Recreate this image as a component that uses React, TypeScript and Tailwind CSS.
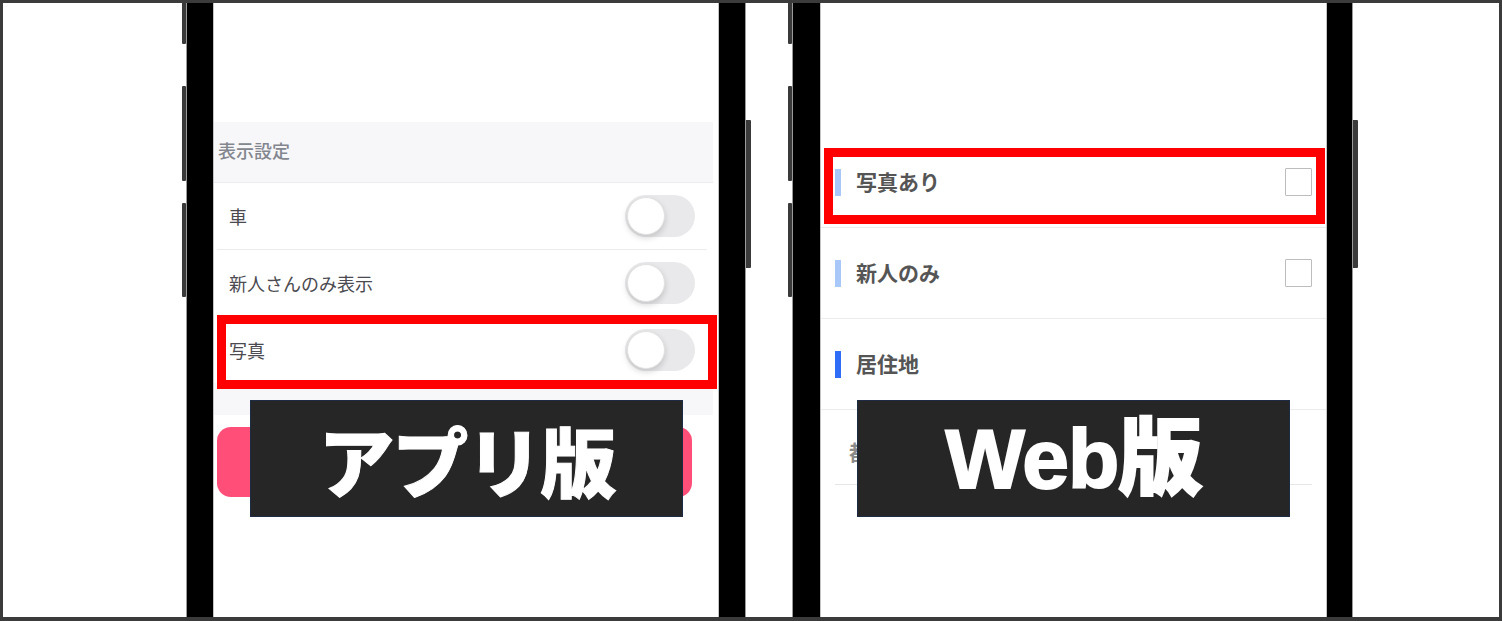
const jp = { fontFamily: '"Noto Sans CJK JP", "Noto Sans", sans-serif' };

function SideButtonsLeft() {
  return (
    <div className="flex w-[4px] shrink-0 flex-col">
      <div className="h-[41px] rounded-b-[1px] bg-[#3a3a3a]" />
      <div className="mt-[42px] h-[95px] rounded-[1px] bg-[#3a3a3a]" />
      <div className="mt-[22px] h-[94px] rounded-[1px] bg-[#3a3a3a]" />
    </div>
  );
}

function SideButtonRight() {
  return (
    <div className="flex w-[5px] shrink-0 flex-col">
      <div className="mt-[117px] h-[148px] rounded-r-[1px] bg-[#3a3a3a]" />
    </div>
  );
}

function Phone({ screenW, leftBezel, rightBezel, children }: { screenW: string; leftBezel: string; rightBezel: string; children: React.ReactNode }) {
  return (
    <div className="flex h-full shrink-0">
      <SideButtonsLeft />
      <div className="w-px shrink-0 bg-[#9a9a9a]" />
      <div className={`${leftBezel} shrink-0 bg-black`} />
      <div className={`${screenW} relative shrink-0 overflow-hidden border-x border-[#c4c4c4] bg-white`}>{children}</div>
      <div className={`${rightBezel} shrink-0 bg-black`} />
      <div className="w-px shrink-0 bg-[#9a9a9a]" />
      <SideButtonRight />
    </div>
  );
}

function Toggle() {
  return (
    <div className="flex h-[42px] w-[70px] items-center rounded-full bg-[#e9e9eb] px-[2px]">
      <div className="h-[38px] w-[38px] rounded-full border border-[#e2e2e2] bg-white shadow-[0_3px_6px_rgba(0,0,0,0.16)]" />
    </div>
  );
}

function AppScreen() {
  const rows = ["車", "新人さんのみ表示", "写真"];
  return (
    <div style={jp} className="flex h-full">
      <div className="flex w-[499px] flex-col">
        <div className="mt-[119px] flex h-[61px] items-center border-b border-[#ececef] bg-[#f7f7fa] pb-[4px] pl-[4px] text-[18px] font-medium text-[#83868e]">
          表示設定
        </div>
        {rows.map((r, i) => (
          <div key={r}>
            <div className="flex h-[66px] items-center justify-between pl-[15px] pr-[18px]">
              <span className="text-[18px] text-[#4a4a50]">{r}</span>
              <Toggle />
            </div>
            {i < rows.length - 1 && <div className="ml-[3px] mr-[6px] h-px bg-[#ececef]" />}
          </div>
        ))}
        <div className="h-[32px] bg-[#f7f7fa]" />
        <div className="ml-[3px] mt-[12px] h-[70px] w-[475px] rounded-[14px] bg-[#ff4f78]" />
      </div>

      {/* highlight */}
      <div className="absolute left-[3px] top-[312px] h-[74px] w-[500px] border-[9px] border-[#ff0000]" />

      {/* caption */}
      <div className="absolute left-[36px] top-[397px] flex h-[117px] w-[433px] items-center justify-center border border-[#1d2c44] bg-[#262626]">
        <span className="text-[76px] font-black leading-none tracking-[-2px] text-white [-webkit-text-stroke:1px_white]">アプリ版</span>
      </div>
    </div>
  );
}

function WebRow({ label, bar, checkbox = true }: { label: string; bar: string; checkbox?: boolean }) {
  return (
    <div className="flex h-[91px] items-center justify-between border-b border-[#ececec] pl-[14px] pr-[14px]">
      <div className="flex items-center gap-[15px]">
        <div className={`h-[27px] w-[6px] ${bar}`} />
        <span className="text-[21px] font-bold text-[#555555]">{label}</span>
      </div>
      {checkbox && <div className="h-[28px] w-[27px] rounded-[1px] border-[1.5px] border-[#bdbdbd] bg-white" />}
    </div>
  );
}

function WebScreen() {
  return (
    <div style={jp} className="flex h-full flex-col">
      <div className="mt-[134px]">
        <WebRow label="写真あり" bar="bg-[#a9c8fa]" />
        <WebRow label="新人のみ" bar="bg-[#a9c8fa]" />
        <WebRow label="居住地" bar="bg-[#2f6df6]" checkbox={false} />
      </div>
      <div className="mx-[14px] mt-[9px] flex h-[66px] items-center border-b border-[#e6e6e6] pl-[14px] text-[21px] font-bold text-[#8a8a8a]">
        都道府県を選択
      </div>

      {/* highlight */}
      <div className="absolute left-[3px] top-[145px] h-[76px] w-[501px] border-[9px] border-[#ff0000]" />

      {/* caption */}
      <div className="absolute left-[36px] top-[397px] flex h-[117px] w-[433px] items-center justify-center border border-[#1d2c44] bg-[#262626]">
        <span
          className="text-[84px] font-black leading-none tracking-[-1px] text-white [-webkit-text-stroke:2px_white]"
          style={{ fontFamily: '"Liberation Sans", "Noto Sans CJK JP", sans-serif' }}
        >
          Web版
        </span>
      </div>
    </div>
  );
}

export default function App() {
  return (
    <div className="flex h-[621px] w-[1502px] overflow-hidden border-x-[3px] border-b-[4px] border-t-[3px] border-[#3b3b3b] bg-white">
      <div className="w-[179px] shrink-0" />
      <Phone screenW="w-[506px]" leftBezel="w-[26px]" rightBezel="w-[26px]">
        <AppScreen />
      </Phone>
      <div className="w-[37px] shrink-0" />
      <Phone screenW="w-[507px]" leftBezel="w-[27px]" rightBezel="w-[25px]">
        <WebScreen />
      </Phone>
      <div className="flex-1" />
    </div>
  );
}
